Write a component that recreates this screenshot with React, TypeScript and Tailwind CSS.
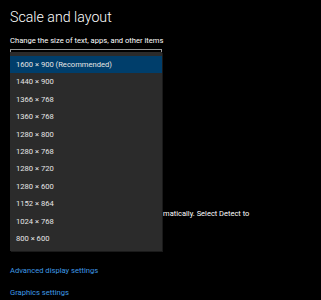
import React from "react";

const items = [
  "1600 × 900 (Recommended)",
  "1440 × 900",
  "1366 × 768",
  "1360 × 768",
  "1280 × 800",
  "1280 × 768",
  "1280 × 720",
  "1280 × 600",
  "1152 × 864",
  "1024 × 768",
  "800 × 600",
];

export default function App() {
  return (
    <div
      className="relative w-[321px] h-[300px] overflow-hidden bg-black text-white"
      style={{ fontFamily: 'Roboto, "Noto Sans", sans-serif' }}
    >
      <div className="flex flex-col pl-[10px]">
        <div className="mt-[7px] h-[20px] text-[14.2px] font-light leading-[20px] text-white">Scale and layout</div>
        <div className="mt-[7px] h-[14px] whitespace-nowrap text-[7.6px] leading-[14px] text-white">
          Change the size of text, apps, and other items
        </div>
        <div className="mt-[1px] h-[30px] w-[152px] border border-[#9a9a9a]" />
        <div className="mt-[128px] h-[14px] whitespace-nowrap pl-[2px] text-[7.5px] leading-[14px] text-white">
          Older displays might not always connect automatically. Select Detect to
        </div>
        <div className="mt-[43px] h-[14px] text-[7.6px] leading-[14px] text-[#3f9ae6]">Advanced display settings</div>
        <div className="mt-[8px] h-[14px] text-[7.6px] leading-[14px] text-[#3f9ae6]">Graphics settings</div>
      </div>

      <div className="absolute left-[10px] top-[52px] flex w-[152px] flex-col bg-[#2b2b2b] pt-[4px] pb-[4px] shadow-[1px_1px_0_#1a1a1a]">
        {items.map((it, i) => (
          <div
            key={it}
            className={
              "flex h-[17.4px] items-center pl-[6px] text-[7.6px] text-[#e6e6e6] " +
              (i === 0 ? "bg-[#003e6b]" : "")
            }
          >
            {it}
          </div>
        ))}
      </div>
    </div>
  );
}
